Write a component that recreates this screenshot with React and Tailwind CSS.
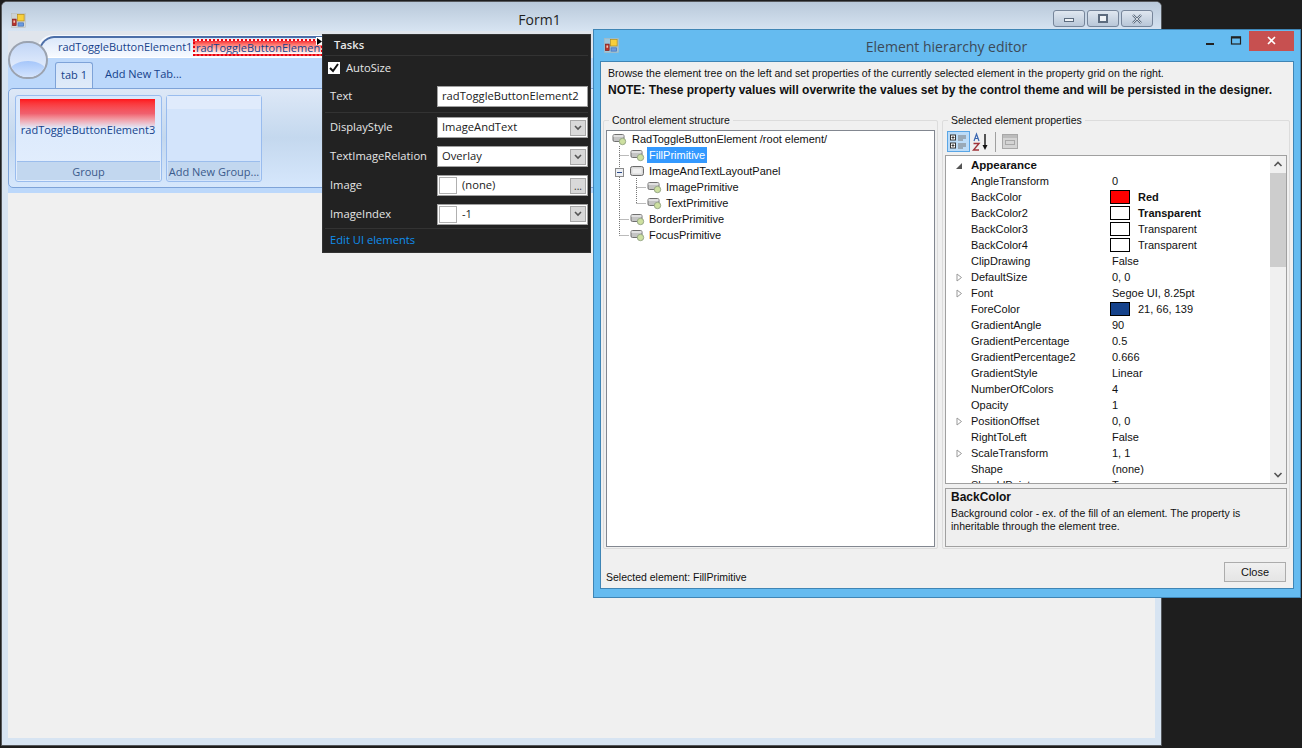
import React from 'react';

const AppIcon = () => (
    <svg width="15" height="15" viewBox="0 0 16 16" className="shrink-0">
        <rect x="0.5" y="0.5" width="15" height="15" fill="#cfcfc8" fillOpacity="0.55" stroke="#b8b8b0" strokeWidth="0.5" />
        <rect x="1.5" y="6.5" width="4" height="7" fill="#b8322a" stroke="#7d1c1a" strokeWidth="0.7" />
        <rect x="2.6" y="8" width="1.8" height="2.4" fill="#f4c9b5" />
        <rect x="7" y="1.5" width="7" height="7" fill="#f7cf3c" stroke="#b58a10" strokeWidth="0.7" />
        <rect x="7.5" y="10.5" width="6" height="3.5" fill="#6b9be0" stroke="#3f6cb5" strokeWidth="0.7" />
    </svg>
);

const NodeIcon = ({ wide }) => (
    <svg width="16" height="14" viewBox="0 0 16 14" className="shrink-0">
        {wide ? (
            <>
                <rect x="0.5" y="2.5" width="13" height="9" rx="2" fill="#d8d8d8" stroke="#6a6a6a" />
                <rect x="2.5" y="4.5" width="9" height="5" fill="#f0f0f0" />
            </>
        ) : (
            <>
                <rect x="1" y="2.5" width="11" height="7" rx="1.5" fill="#c4c4c4" stroke="#707070" />
                <rect x="1.5" y="3" width="10" height="2" fill="#e0e0e0" />
                <circle cx="10.5" cy="9.5" r="3.2" fill="#cde0a0" stroke="#98a888" />
            </>
        )}
    </svg>
);

const CaptionButton = ({ children }) => (
    <div className="w-8 h-[17px] rounded-[3px] border border-[#76859a] bg-gradient-to-b from-[#dfe7f0] to-[#b9c7d8] flex items-center justify-center">
        {children}
    </div>
);

const ChevronBox = ({ children }) => (
    <div className="w-4 h-4 mr-[1px] bg-[#d9d9d9] border border-[#a8a8a8] flex items-center justify-center text-[10px] leading-none text-[#333] shrink-0">
        {children || (
            <svg width="8" height="6" viewBox="0 0 8 6">
                <path d="M1 1l3 3 3-3" fill="none" stroke="#555" strokeWidth="1.6" />
            </svg>
        )}
    </div>
);

const FormWindow = () => (
    <div className="absolute left-[1px] top-[1px] w-[1161px] h-[745px] bg-[#d7e4f2] border border-[#55585c] rounded-t-md flex flex-col overflow-hidden font-['Open_Sans',sans-serif]">
        <div className="h-[29px] shrink-0 bg-gradient-to-b from-[#b9c9da] to-[#d7e4f2] flex items-center pl-[9px]">
            <div className="mt-[8px]"><AppIcon /></div>
            <div className="flex-1 text-center text-[14px] text-[#1f1f1f] pt-[6px]">Form1</div>
            <div className="flex gap-[2px] mr-[8px] mt-[4px]">
                <CaptionButton>
                    <div className="w-[10px] h-[4px] bg-[#eef2f6] border border-[#5c6b7e] mt-[3px]" />
                </CaptionButton>
                <CaptionButton>
                    <div className="w-[10px] h-[9px] bg-[#eef2f6] border-2 border-[#5c6b7e]" />
                </CaptionButton>
                <CaptionButton>
                    <svg width="12" height="10" viewBox="0 0 12 10">
                        <path d="M2 1l8 8M10 1L2 9" stroke="#5c6b7e" strokeWidth="2.4" />
                        <path d="M2 1l8 8M10 1L2 9" stroke="#eef2f6" strokeWidth="0.8" />
                    </svg>
                </CaptionButton>
            </div>
        </div>
        <div className="flex-1 mx-[6px] mb-[7px] bg-[#f0f0f0] flex flex-col min-h-0">
            <Ribbon />
        </div>
    </div>
);

const Ribbon = () => (
    <div className="h-[162px] shrink-0 bg-[#bcd8fb] relative flex flex-col">
        <div className="h-[27px] shrink-0 bg-[#e0e5ec] pt-[5px] pl-[29px]">
            {/* quick access bar, its curved end wraps round the orb */}
            <div className="w-[400px] h-[22px] rounded-tl-[17px_22px] border-t-2 border-l-2 border-[#4b6ea8] border-b border-b-white shadow-[-2px_-1px_0_#f4f8fe] bg-gradient-to-b from-[#dbe8fa] to-[#f7faff] flex items-center pl-[19px] text-[11px] text-[#15428b] whitespace-nowrap">
                <span className="w-[135px] shrink-0">radToggleButtonElement1</span>
                <div className="w-[130px] h-[17px] shrink-0 border-2 border-dotted border-[#e8000d] bg-gradient-to-b from-[#f52b35] to-white overflow-hidden leading-[13px] pl-[1px]">
                    radToggleButtonElement2
                </div>
            </div>
        </div>
        {/* Orb */}
        <div className="absolute z-20 left-0 top-[10px] w-[40px] h-[38px] rounded-full border-2 border-[#9ba3b0] bg-gradient-to-b from-[#c2d6f6] to-[#eef4fe] overflow-hidden">
            <div className="h-[18px]" />
            <div className="h-[20px] rounded-t-[50%] bg-gradient-to-b from-[#a5c6fa] to-[#dfebfe]" />
        </div>
        {/* Element glyph marker */}
        <div className="absolute z-20 left-[308px] top-[6px] w-[6px] h-[8px] bg-white flex items-center justify-center">
            <svg width="5" height="7" viewBox="0 0 5 7"><path d="M0 0l5 3.5L0 7z" fill="#000" /></svg>
        </div>
        <div className="h-[30px] shrink-0 bg-[#bcd8fb] flex items-end pl-[47px] text-[11px] text-[#15428b]">
            <div className="w-[38px] h-[26px] bg-gradient-to-b from-[#d3e4fb] to-[#e0ebf8] border border-b-0 border-[#7ea3d8] rounded-t-[3px] text-center leading-[24px]">tab 1</div>
            <div className="ml-[12px] h-[26px] leading-[24px]">Add New Tab...</div>
        </div>
        <div className="h-[100px] shrink-0 rounded-[5px] border border-[#7ea3d8] bg-gradient-to-b from-[#dde8f7] via-[#c4d8ee] to-[#d6e7fc] flex gap-[4px] pl-[6px] pt-[6px] text-[11px]">
            <div className="w-[147px] h-[87px] rounded-[3px] border border-[#99bcee] bg-gradient-to-b from-[#d9e8fc] to-[#e3eefd] flex flex-col">
                <div className="flex-1 pt-[3px] pl-[4px] pr-[3px] overflow-hidden">
                    <div className="w-[135px] h-[29px] bg-gradient-to-b from-[#ff1018] via-[#f0606e] to-[#dfeafb]" />
                    <div className="-mt-[5px] -ml-[2px] text-center text-[#15428b] leading-[14px] whitespace-nowrap">radToggleButtonElement3</div>
                </div>
                <div className="h-[19px] mx-[1px] mb-[1px] bg-[#c2d7ef] border-t border-[#9bbdec] text-center text-[#3a5a8c] leading-[20px]">Group</div>
            </div>
            <div className="w-[96px] h-[87px] rounded-[3px] border border-[#99bcee] bg-[#d3e4fb] flex flex-col">
                <div className="h-[13px] bg-[#e0ebfc]" />
                <div className="flex-1" />
                <div className="h-[19px] mx-[1px] mb-[1px] bg-[#c2d7ef] border-t border-[#9bbdec] text-center text-[#3a5a8c] leading-[20px] whitespace-nowrap">Add New Group...</div>
            </div>
        </div>
    </div>
);

const TaskLabel = ({ children }) => <div className="w-[107px] shrink-0 text-[11.2px] text-[#e6e6e6] whitespace-nowrap">{children}</div>;

const TaskField = ({ text, swatch, button }) => (
    <div className="w-[151px] h-[21px] bg-white border border-[#a0a0a0] flex items-center text-[11.2px] text-[#1a1a1a]">
        {swatch && <div className="w-[18px] h-[17px] ml-[1px] mr-[5px] border border-[#b0b0b0] shrink-0" />}
        <span className={`flex-1 whitespace-nowrap ${swatch ? '' : 'pl-[4px]'}`}>{text}</span>
        {button && <ChevronBox>{button === 'dots' ? '...' : null}</ChevronBox>}
    </div>
);

const TasksPanel = () => (
    <div className="absolute z-30 left-[322px] top-[34px] w-[269px] h-[219px] bg-[#222222] border border-[#333] flex flex-col px-[2px] font-['Open_Sans',sans-serif]">
        <div className="h-[21px] shrink-0 border-b border-[#333] pl-[9px] text-[11.2px] font-semibold text-[#e8e8e8] leading-[20px]">Tasks</div>
        <div className="h-[24px] shrink-0 flex items-center pl-[3px] text-[11.2px] text-[#e6e6e6]">
            <div className="w-[12px] h-[12px] bg-white mr-[6px] flex items-center justify-center">
                <svg width="10" height="10" viewBox="0 0 10 10">
                    <path d="M1 5l3 3 5-7" fill="none" stroke="#111" strokeWidth="2" />
                </svg>
            </div>
            AutoSize
        </div>
        <div className="h-[33px] shrink-0 flex items-center pl-[5px] pt-[1px] border-b border-[#333]">
            <TaskLabel>Text</TaskLabel>
            <TaskField text="radToggleButtonElement2" />
        </div>
        <div className="h-[29px] shrink-0 flex items-center pl-[5px]">
            <TaskLabel>DisplayStyle</TaskLabel>
            <TaskField text="ImageAndText" button="chevron" />
        </div>
        <div className="h-[29px] shrink-0 flex items-center pl-[5px]">
            <TaskLabel>TextImageRelation</TaskLabel>
            <TaskField text="Overlay" button="chevron" />
        </div>
        <div className="h-[29px] shrink-0 flex items-center pl-[5px]">
            <TaskLabel>Image</TaskLabel>
            <TaskField text="(none)" swatch button="dots" />
        </div>
        <div className="h-[29px] shrink-0 flex items-center pl-[5px] border-b border-[#333]">
            <TaskLabel>ImageIndex</TaskLabel>
            <TaskField text="-1" swatch button="chevron" />
        </div>
        <div className="flex-1 flex items-center pl-[5px] text-[11.2px] text-[#0f8fee]">Edit UI elements</div>
    </div>
);

const treeNodes = [
    { label: 'RadToggleButtonElement /root element/', indent: 5, root: true },
    { label: 'FillPrimitive', indent: 23, selected: true },
    { label: 'ImageAndTextLayoutPanel', indent: 23, wide: true },
    { label: 'ImagePrimitive', indent: 40 },
    { label: 'TextPrimitive', indent: 40 },
    { label: 'BorderPrimitive', indent: 23 },
    { label: 'FocusPrimitive', indent: 23 }
];

const TreeGuides = () => (
    <svg className="absolute left-0 top-0" width="60" height="110" fill="none" stroke="#777" strokeDasharray="1 1">
        <path d="M12.5 15v21M12.5 46v58.5M12.5 24.5h10M12.5 88.5h10M12.5 104.5h10" />
        <path d="M29.5 47v25.5M29.5 56.5h10M29.5 72.5h10" />
    </svg>
);

const Tree = () => (
    <div className="relative h-[417px] border border-[#828790] bg-white text-[11px] text-[#111]">
        <TreeGuides />
        <div className="absolute left-[8px] top-[37px] w-[9px] h-[9px] border border-[#8a8a8a] bg-[#eef0f4] flex items-center justify-center">
            <div className="w-[5px] h-[1px] bg-[#2a4a8a]" />
        </div>
        {treeNodes.map((node) => (
            <div key={node.label} className="relative h-4 flex items-center whitespace-nowrap" style={{ paddingLeft: node.indent }}>
                <NodeIcon wide={node.wide} />
                <span className={node.selected ? 'ml-[1px] px-[2px] h-4 leading-[16px] bg-[#3399ff] text-white' : node.root ? 'ml-[4px]' : 'ml-[3px]'}>{node.label}</span>
            </div>
        ))}
    </div>
);

const properties = [
    { name: 'AngleTransform', value: '0' },
    { name: 'BackColor', value: 'Red', swatch: 'bg-[#ff0000]', bold: true },
    { name: 'BackColor2', value: 'Transparent', swatch: 'bg-white', bold: true },
    { name: 'BackColor3', value: 'Transparent', swatch: 'bg-white' },
    { name: 'BackColor4', value: 'Transparent', swatch: 'bg-white' },
    { name: 'ClipDrawing', value: 'False' },
    { name: 'DefaultSize', value: '0, 0', expand: true },
    { name: 'Font', value: 'Segoe UI, 8.25pt', expand: true },
    { name: 'ForeColor', value: '21, 66, 139', swatch: 'bg-[#15428b]' },
    { name: 'GradientAngle', value: '90' },
    { name: 'GradientPercentage', value: '0.5' },
    { name: 'GradientPercentage2', value: '0.666' },
    { name: 'GradientStyle', value: 'Linear' },
    { name: 'NumberOfColors', value: '4' },
    { name: 'Opacity', value: '1' },
    { name: 'PositionOffset', value: '0, 0', expand: true },
    { name: 'RightToLeft', value: 'False' },
    { name: 'ScaleTransform', value: '1, 1', expand: true },
    { name: 'Shape', value: '(none)' },
    { name: 'ShouldPaint', value: 'True' }
];

const PropertyRow = ({ prop }) => (
    <div className="h-4 shrink-0 flex items-center whitespace-nowrap text-[11px] text-[#111]">
        <div className="w-[25px] shrink-0 pl-[10px] flex items-center">
            {prop.expand && (
                <svg width="7" height="9" viewBox="0 0 7 9">
                    <path d="M1 1l4.5 3.5L1 8z" fill="white" stroke="#999" />
                </svg>
            )}
        </div>
        <div className="w-[139px] shrink-0">{prop.name}</div>
        {prop.swatch ? (
            <div className={`w-[20px] h-[14px] mr-[8px] border border-black shrink-0 ${prop.swatch}`} />
        ) : null}
        <div className={`${prop.bold ? 'font-bold' : ''} ${prop.swatch ? '' : 'pl-[2px]'}`}>{prop.value}</div>
    </div>
);

const PropertyGrid = () => (
    <div className="h-[329px] border border-[#a0a0a0] bg-white flex overflow-hidden">
        <div className="flex-1 pt-[1px] flex flex-col">
            <div className="h-4 shrink-0 flex items-center pt-[2px] text-[11.5px] font-bold text-[#111]">
                <div className="w-[25px] pl-[9px] flex items-center">
                    <svg width="8" height="8" viewBox="0 0 8 8"><path d="M7 1v6H1z" fill="#555" /></svg>
                </div>
                Appearance
            </div>
            {properties.map((prop) => <PropertyRow key={prop.name} prop={prop} />)}
        </div>
        <div className="w-[16px] shrink-0 bg-[#f0f0f0] flex flex-col items-center">
            <svg width="10" height="17" viewBox="0 0 10 17" className="shrink-0">
                <path d="M1.5 10l3.5-3.5 3.5 3.5" fill="none" stroke="#555" strokeWidth="1.6" />
            </svg>
            <div className="w-full h-[94px] bg-[#cdcdcd]" />
            <div className="flex-1" />
            <svg width="10" height="17" viewBox="0 0 10 17" className="shrink-0">
                <path d="M1.5 7l3.5 3.5 3.5-3.5" fill="none" stroke="#555" strokeWidth="1.6" />
            </svg>
        </div>
    </div>
);

const GridToolbar = () => (
    <div className="h-[25px] mt-[3px] shrink-0 flex items-center pb-[2px] pl-[2px] bg-[#f0f0f0]">
        <div className="w-[23px] h-[21px] bg-[#bcdcf8] border border-[#5aa6e6] flex items-center justify-center">
            <svg width="17" height="15" viewBox="0 0 17 15">
                <rect x="0.5" y="1" width="5" height="5" fill="white" stroke="#333" />
                <rect x="0.5" y="9" width="5" height="5" fill="white" stroke="#333" />
                <path d="M1.5 3.5h3M3 2v3M1.5 11.5h3M3 10v3" stroke="#222" strokeWidth="0.8" />
                <path d="M8 2h8M8 4h8M8 6h5M8 10h8M8 12h8M8 14h5" stroke="#777" />
            </svg>
        </div>
        <svg width="22" height="20" viewBox="0 0 22 20" className="ml-[1px]">
            <path d="M3 9l2.5-7L8 9M4 6.5h3" fill="none" stroke="#3a66b0" strokeWidth="1.2" />
            <path d="M2.5 11.5h5.5l-5.5 6.5H8" fill="none" stroke="#a0343a" strokeWidth="1.4" />
            <path d="M14 2v13" stroke="#111" strokeWidth="1.4" />
            <path d="M11.5 13h5l-2.5 5z" fill="#111" />
        </svg>
        <div className="w-px h-[20px] bg-[#a0a0a0] ml-[2px]" />
        <div className="w-[16px] h-[15px] ml-[6px] bg-[#d4d4d4] border border-[#a8a8a8] flex flex-col">
            <div className="h-[3px] bg-[#bcbcbc]" />
            <div className="mx-[2px] mt-[2px] h-[5px] border border-[#a8a8a8]" />
        </div>
    </div>
);

const HierarchyDialog = () => (
    <div className="absolute z-40 left-[593px] top-[29px] w-[708px] h-[569px] bg-[#65bbf0] border border-[#3f85b5] flex flex-col font-['Liberation_Sans',sans-serif]">
        <div className="h-[31px] shrink-0 relative flex items-center pl-[10px]">
            <AppIcon />
            <div className="flex-1 text-center text-[14px] text-[#3c4a58] pr-[26px] pt-[1px] font-['Open_Sans',sans-serif]">Element hierarchy editor</div>
            <div className="absolute right-[6px] top-[1px] flex items-start">
                <svg width="90" height="20" viewBox="0 0 90 20">
                    <rect x="47" y="12" width="8" height="2" fill="#222" />
                    <rect x="72.5" y="6" width="9" height="7" fill="none" stroke="#222" strokeWidth="1.2" />
                    <path d="M72 6.5h10" stroke="#222" strokeWidth="2" />
                </svg>
                <div className="w-[45px] h-[20px] bg-[#c75050] flex items-center justify-center">
                    <svg width="10" height="10" viewBox="0 0 10 10">
                        <path d="M1 1l7 7M8 1L1 8" stroke="white" strokeWidth="1.6" />
                    </svg>
                </div>
            </div>
        </div>
        <div className="h-[528px] mx-[6px] bg-[#f0f0f0] border border-[#3f85b5] flex flex-col px-[2px]">
            <div className="pl-[5px] pt-[4px] h-[18px] text-[10.55px] leading-[14px] text-[#111] whitespace-nowrap">
                Browse the element tree on the left and set properties of the currently selected element in the property grid on the right.
            </div>
            <div className="pl-[5px] pt-[3px] h-[19px] text-[12px] leading-[15px] font-bold text-[#111] whitespace-nowrap">
                NOTE: These property values will overwrite the values set by the control theme and will be persisted in the designer.
            </div>
            <div className="flex gap-[4px] mt-[14px]">
                <fieldset className="w-[335px] h-[436px] border border-[#dcdcdc] px-[2px] rounded-[2px]">
                    <legend className="ml-[3px] px-[3px] text-[10.5px] leading-[14px] text-[#111]">Control element structure</legend>
                    <div className="w-[329px] mt-[3px]"><Tree /></div>
                </fieldset>
                <fieldset className="w-[348px] h-[436px] border border-[#dcdcdc] px-[2px] rounded-[2px]">
                    <legend className="ml-[3px] px-[3px] text-[10.5px] leading-[14px] text-[#111]">Selected element properties</legend>
                    <GridToolbar />
                    <PropertyGrid />
                    <div className="h-[59px] mt-[4px] border border-[#a0a0a0] bg-[#efefef] px-[5px] pt-[1px] text-[10.5px] leading-[13px] text-[#111]">
                        <div className="font-bold leading-[15px] mb-[2px] text-[12px]">BackColor</div>
                        Background color - ex. of the fill of an element. The property is inheritable through the element tree.
                    </div>
                </fieldset>
            </div>
            <div className="flex items-center justify-between pl-[3px] pr-[5px] mt-[9px]">
                <span className="text-[10.5px] text-[#111] pt-[12px]">Selected element: FillPrimitive</span>
                <button className="w-[62px] h-[20px] border border-[#acacac] bg-gradient-to-b from-[#f0f0f0] to-[#e5e5e5] text-[11px] text-[#111]">Close</button>
            </div>
        </div>
    </div>
);

export default function App() {
    return (
        <div className="relative w-[1302px] h-[748px] bg-[#1e1e1e] overflow-hidden">
            <FormWindow />
            <TasksPanel />
            <HierarchyDialog />
        </div>
    );
}
